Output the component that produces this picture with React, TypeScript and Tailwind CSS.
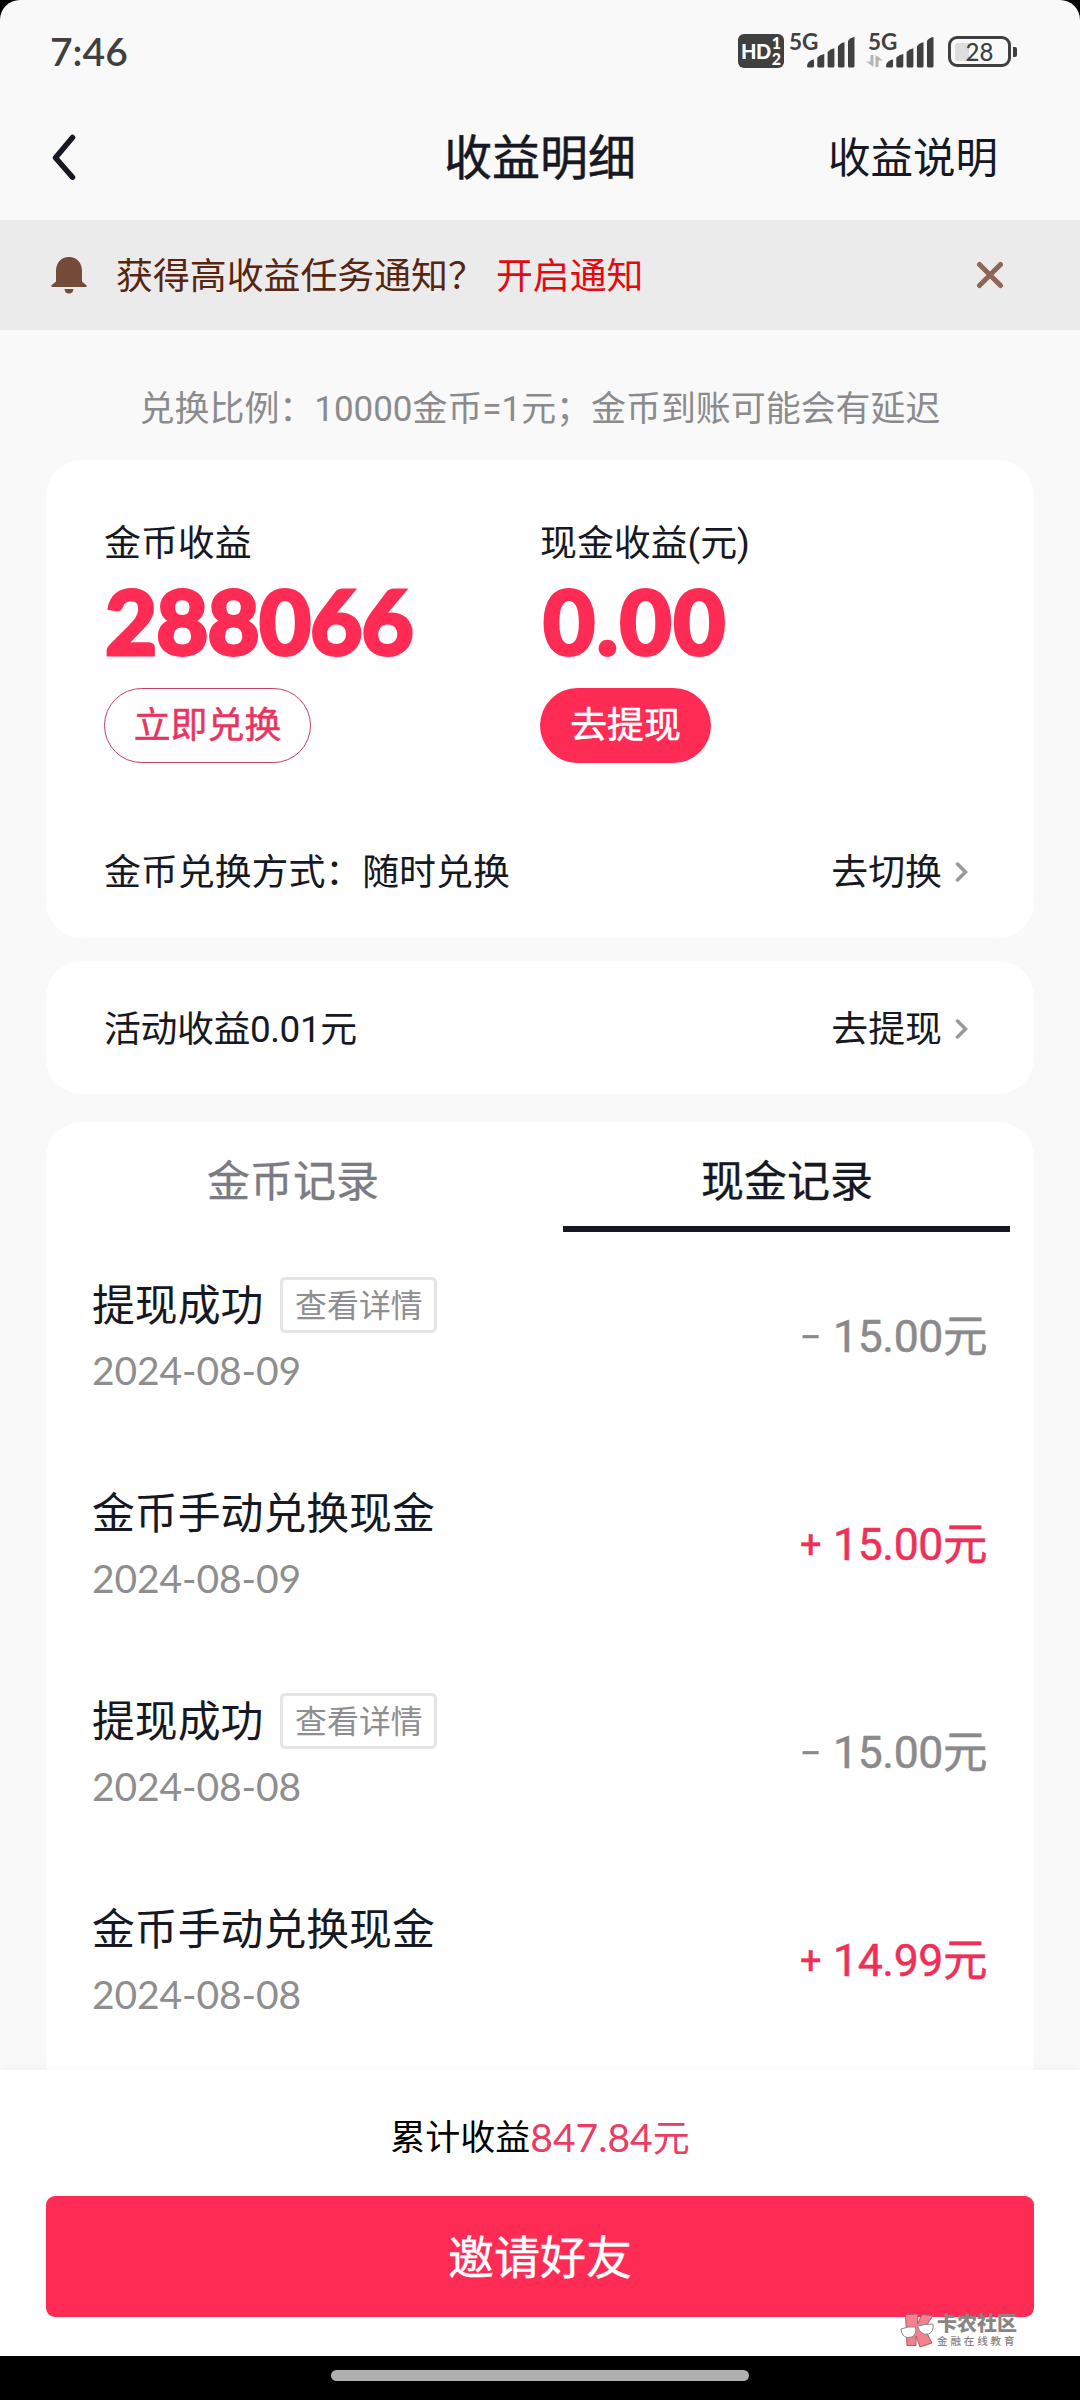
const records = [
  { title: "提现成功", date: "2024-08-09", amount: "15.00", income: false },
  { title: "金币手动兑换现金", date: "2024-08-09", amount: "15.00", income: true },
  { title: "提现成功", date: "2024-08-08", amount: "15.00", income: false },
  { title: "金币手动兑换现金", date: "2024-08-08", amount: "14.99", income: true },
];

function SignalBars() {
  return (
    <svg width="48" height="31" viewBox="0 0 48 31" fill="#404040">
      <path d="M0 29.5c0-4 3-6.500 7-7V29q0 1.500-1.500 1.500h-4Q0 30.500 0 29.500Z" />
      <path d="M10.300 20.500Q13 17.500 17.300 17V29q0 1.500-1.500 1.500h-4q-1.500 0-1.500-1.500Z" />
      <path d="M20.600 15Q23 11.800 27.400 11.300V29q0 1.500-1.500 1.500h-3.800q-1.500 0-1.500-1.500Z" />
      <path d="M30.900 9.500Q33 6 37.500 5.300V29q0 1.500-1.500 1.500h-3.600q-1.500 0-1.500-1.500Z" />
      <path d="M41 4Q43 .500 47.500 0V29q0 1.500-1.500 1.500h-3.500q-1.500 0-1.500-1.500Z" />
    </svg>
  );
}

function DataArrows() {
  return (
    <svg width="17" height="12" viewBox="0 0 17 12" fill="#b5b5b5">
      <path d="M4.500 0h3v12L0 6.500h4.500ZM9.500 12h3V5.500H17L9.500 0Z" />
    </svg>
  );
}

function StatusBar() {
  return (
    <div className="flex h-[96px] items-start pl-[50px] text-[#404040]">
      <span className="mt-[27px] font-[Lato] text-[39px] leading-[48px] font-semibold">7:46</span>
      <div className="ml-auto flex pr-[63px]">
        <div className="mt-[34px] flex h-[34px] w-[46px] rounded-[6px] bg-[#404040] pl-[3px] text-white">
          <span className="font-[Lato] text-[20px] leading-[34px] font-black tracking-[-0.5px]">HD</span>
          <span className="ml-px flex flex-col pt-px font-[Lato] text-[16px] leading-[16px] font-black">
            <span>1</span>
            <span>2</span>
          </span>
        </div>
        <div className="relative ml-[5px] w-[66px] pt-[37px]">
          <span className="absolute top-[31px] left-0 font-[Lato] text-[22.500px] leading-[21px] font-bold">5G</span>
          <div className="flex justify-end">
            <SignalBars />
          </div>
        </div>
        <div className="relative ml-[13px] w-[66px] pt-[37px]">
          <span className="absolute top-[31px] left-0 font-[Lato] text-[22.500px] leading-[21px] font-bold">5G</span>
          <div className="absolute top-[55px] -left-[2px]">
            <DataArrows />
          </div>
          <div className="flex justify-end">
            <SignalBars />
          </div>
        </div>
        <div className="mt-[36px] ml-[14px] flex h-[31px] items-center">
          <div className="relative flex h-[31px] w-[63px] items-center justify-center rounded-[9px] border-[3px] border-[#404040]">
            <div className="absolute left-[4px] h-[18px] w-[14px] rounded-l-[3px] bg-[#dedede]" />
            <span className="relative font-[Lato] text-[24px] leading-[24px] font-medium">28</span>
          </div>
          <div className="ml-[2px] h-[10px] w-[4px] rounded-r-[2px] bg-[#404040]" />
        </div>
      </div>
    </div>
  );
}

function Header() {
  return (
    <div className="grid h-[124px] grid-cols-3 items-start pt-[31px] leading-[64px] text-[#161823]">
      <svg className="mt-[7px] ml-[51px]" width="26" height="48" viewBox="0 0 26 48" fill="none">
        <path d="M21.500 3.500 4.500 23.800l17 19.400" stroke="#161823" strokeWidth="5.500" strokeLinecap="round" strokeLinejoin="round" />
      </svg>
      <h1 className="text-center text-[48px] [-webkit-text-stroke:0.5px]">收益明细</h1>
      <span className="pr-[82px] text-right text-[42.500px]">收益说明</span>
    </div>
  );
}

function Notice() {
  return (
    <div className="flex h-[110px] items-center bg-[#ebebeb] pr-[76px] pl-[51px] text-[36.900px] leading-[52px] text-[#572610]">
      <svg width="36" height="37" viewBox="0 0 36 37" fill="#744a38">
        <path d="M18 0C10 0 5 6 5 14v10.500L.6 28.200Q-.5 30 1.500 30h33q2 0 .9-1.800L31 24.500V14C31 6 26 0 18 0ZM13.500 32h9q-.5 4.500-4.500 4.500T13.500 32Z" />
      </svg>
      <span className="mt-[3px] ml-[29px]">获得高收益任务通知？</span>
      <span className="mt-[3px] ml-[11px] text-[#e60a10]">开启通知</span>
      <svg className="ml-auto" width="28" height="28" viewBox="0 0 28 28" fill="none">
        <path d="m3.500 3.500 21 21m0-21-21 21" stroke="#8f6555" strokeWidth="5" strokeLinecap="round" />
      </svg>
    </div>
  );
}

function Chevron() {
  return (
    <svg width="14" height="20" viewBox="0 0 14 20" fill="none">
      <path d="m2.500 2 8 8-8 8" stroke="#999" strokeWidth="3.500" strokeLinecap="round" />
    </svg>
  );
}

function LinkRow({ label, action }: { label: string; action: string }) {
  return (
    <div className="flex items-center leading-[52px]">
      <span className="mt-[3px]">{label}</span>
      <span className="mt-[3px] mr-[13px] ml-auto tracking-normal">{action}</span>
      <Chevron />
    </div>
  );
}

function Balance() {
  return (
    <section className="mt-[53px] h-[478px] rounded-[36px] bg-white pt-[58px] pr-[65px] pl-[58px] text-[36.900px]">
      <div className="grid grid-cols-[436px_1fr]">
        <div>
          <p className="leading-[52px]">金币收益</p>
          <p className="mt-[5px] pl-px font-[Lato] text-[90px] leading-[90px] font-black tracking-[-0.900px] text-[#fe2c55] [-webkit-text-stroke:3px_#fe2c55]">
            288066
          </p>
          <button className="mt-[23px] h-[75px] w-[207px] rounded-full border border-[#c4405f] text-[#e83560] [-webkit-text-stroke:0.5px]">
            立即兑换
          </button>
        </div>
        <div>
          <p className="leading-[52px]">现金收益(元)</p>
          <p className="mt-[5px] pl-[3px] font-[Lato] text-[90px] leading-[90px] font-black tracking-[1.500px] text-[#fe2c55] [-webkit-text-stroke:3px_#fe2c55]">
            0.00
          </p>
          <button className="mt-[23px] h-[75px] w-[171px] rounded-full bg-[#fe2c55] text-white [-webkit-text-stroke:0.5px]">
            去提现
          </button>
        </div>
      </div>
      <div className="mt-[81px]">
        <LinkRow label="金币兑换方式：随时兑换" action="去切换" />
      </div>
    </section>
  );
}

function Records() {
  return (
    <section className="mt-[28px] h-[960px] rounded-t-[36px] bg-white">
      <div className="grid grid-cols-2 text-center text-[43px] [-webkit-text-stroke:0.3px]">
        <div className="pt-[28px] leading-[64px] text-[#7b7c82]">金币记录</div>
        <div className="pt-[28px] leading-[64px]">
          现金记录
          <div className="mt-[12px] ml-[23px] h-[6px] w-[447px] bg-[#161823]" />
        </div>
      </div>
      {records.map((record, i) => (
        <div key={i} className="flex h-[208px] items-start pr-[47px] pl-[46px]">
          <div className="pt-[41px]">
            <div className="flex h-[64px] items-center text-[42.850px] leading-[64px]">
              <span className="pt-[2px]">{record.title}</span>
              {!record.income && (
                <button className="ml-[17px] h-[56px] w-[157px] rounded-[5px] border-[3px] border-[#e5e5e5] pt-px text-[31.900px] leading-[50px] text-[#8e8e91]">
                  查看详情
                </button>
              )}
            </div>
            <p className="mt-[9px] font-[Lato] text-[39px] leading-[48px] tracking-[-0.100px] text-[#8e8e8e]">{record.date}</p>
          </div>
          <div
            className={`mt-[71px] ml-auto flex text-[44.500px] leading-[68px] tracking-[-0.400px] [-webkit-text-stroke:0.5px] ${
              record.income ? "text-[#ee3058]" : "text-[#8a8a8c]"
            }`}
          >
            <span className="mr-[12px] text-[38px]">{record.income ? "+" : "−"}</span>
            <span>{record.amount}元</span>
          </div>
        </div>
      ))}
    </section>
  );
}

function Watermark() {
  return (
    <div className="absolute top-[243px] left-[900px] flex gap-[2px] font-['Noto_Sans_CJK_SC'] text-[#8b8484]">
      <svg width="35" height="36" viewBox="0 0 35 36" fill="#f5808f" stroke="#a85e68" strokeWidth="1">
        <path d="M5.500 1.500 18 1l-.500 10L22 1.500l11 1-8.500 13L32 30l-12 4-4-11v9.500H7Z" />
        <path d="M1 16q7-3 14.500-2 1.500 8-4 10-6 1.500-8.500-2-2-3-2-6ZM17.500 13q7-2 15.500-2 1 8-4.500 10-8 2-11-8Z" fill="#fff" stroke="#8b8484" />
      </svg>
      <div className="w-[84px]">
        <p className="text-[20px] leading-[20px] font-black">卡农社区</p>
        <p className="mt-[2px] text-[10.500px] leading-[12px] font-medium tracking-[2.900px] whitespace-nowrap">金融在线教育</p>
      </div>
    </div>
  );
}

function Footer() {
  return (
    <div className="relative h-[286px] bg-white px-[46px] pt-[41px] shadow-[0_-2px_8px_rgba(0,0,0,0.03)]">
      <div className="flex h-[54px] items-center justify-center text-[35px] leading-[54px] text-black">
        <span className="pt-px">累计收益</span>
        <span className="text-[39px] text-[#e83e64]">
          <span className="font-[Lato]">847.84</span>
          <span className="text-[37px]">元</span>
        </span>
      </div>
      <button className="mt-[31px] h-[121px] w-full rounded-[9px] bg-[#fe2c55] pt-[3px] text-[46px] text-white [-webkit-text-stroke:0.4px]">
        邀请好友
      </button>
      <Watermark />
    </div>
  );
}

export default function App() {
  return (
    <div className="h-[2400px] w-[1080px] overflow-hidden bg-black font-[Roboto,'Noto_Sans_CJK_SC',sans-serif] text-[#161823]">
      <div className="flex h-[2356px] flex-col overflow-hidden rounded-t-[20px] bg-[#f9f9f9]">
        <StatusBar />
        <Header />
        <Notice />
        <main className="h-[1740px] overflow-hidden px-[46px] pt-[52px]">
          <p className="h-[25px] text-center text-[34.950px] leading-[55px] text-[#8b8b8d]">
            兑换比例：10000金币=1元；金币到账可能会有延迟
          </p>
          <Balance />
          <section className="mt-[23px] h-[133px] rounded-[36px] bg-white pt-[40px] pr-[65px] pl-[58px] text-[36.900px] tracking-[-0.400px]">
            <LinkRow label="活动收益0.01元" action="去提现" />
          </section>
          <Records />
        </main>
        <Footer />
      </div>
      <div className="flex h-[44px] justify-center pt-[14px]">
        <div className="h-[11px] w-[418px] rounded-full bg-[#b0b0b0]" />
      </div>
    </div>
  );
}
